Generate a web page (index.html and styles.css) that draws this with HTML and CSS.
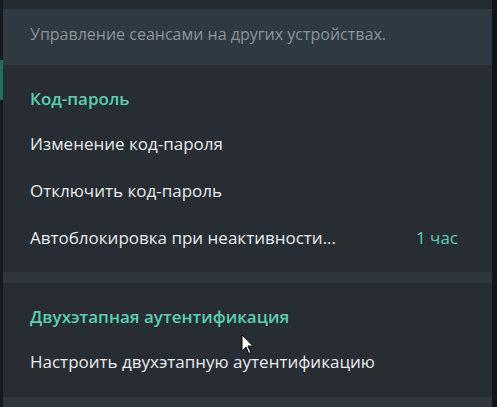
FILE: index.html
```html
<!DOCTYPE html>
<html lang="ru">
<head>
    <meta charset="UTF-8">
    <title>Конфиденциальность</title>
    <link rel="stylesheet" href="styles.css">
</head>
<body>
    <div class="screen">
        <div class="edge edge-left">
            <span class="chat-mark"></span>
        </div>

        <div class="panel">
            <div class="panel-top"></div>
            <div class="about">Управление сеансами на других устройствах.</div>

            <section class="group">
                <h2 class="group-title">Код-пароль</h2>
                <div class="row">Изменение код-пароля</div>
                <div class="row">Отключить код-пароль</div>
                <div class="row">
                    <span>Автоблокировка при неактивности...</span>
                    <span class="row-value">1 час</span>
                </div>
            </section>

            <div class="divider"></div>

            <section class="group">
                <h2 class="group-title">Двухэтапная аутентификация</h2>
                <div class="row">Настроить двухэтапную аутентификацию</div>
            </section>

            <div class="divider divider-bottom"></div>

            <svg class="cursor" width="13" height="21" viewBox="0 0 13 21">
                <path d="M1 1 L1 17 L5 13 L8 20 L10 19 L7 12 L12 12 Z" fill="#fff" stroke="#000" stroke-width="1"/>
            </svg>
        </div>

        <div class="edge edge-right"></div>
    </div>
</body>
</html>
```

FILE: styles.css
```css
:root {
    --fundo: #16191d;
    --painel: #282d33;
    --painel-topo: #262b31;
    --caixa: #2f3942;
    --divisor: #2f363d;
    --texto: #e8ebee;
    --texto-cinza: #8b949c;
    --verde: #58d0b2;
}

body {
    margin: 0;
    padding: 0;
    background-color: var(--fundo);
    font-family: "Open Sans", "Noto Sans", sans-serif;
    font-size: 17px;
    overflow: hidden;
}

.screen {
    display: flex;
    height: 407px;
}

.edge {
    background-color: var(--fundo);
}

.edge-left {
    width: 3px;
    display: flex;
    flex-direction: column;
    padding-top: 60px;
}

.chat-mark {
    display: block;
    height: 40px;
    background-color: #1f6f5e;
}

.edge-right {
    width: 5px;
    background-color: #121417;
}

.panel {
    width: 489px;
    background-color: var(--painel);
    display: flex;
    flex-direction: column;
    position: relative;
}

.panel-top {
    height: 9px;
    background-color: var(--painel-topo);
}

.about {
    height: 57px;
    background-color: var(--caixa);
    color: var(--texto-cinza);
    font-size: 16px;
    padding-left: 27px;
    line-height: 50px;
    box-sizing: border-box;
}

.group {
    padding: 23px 0 11px;
}

.group:last-of-type {
    padding-bottom: 12px;
}

.group-title {
    margin: 0 0 10px;
    padding-left: 27px;
    font-size: 17px;
    font-weight: 600;
    line-height: 22px;
    color: var(--verde);
}

.row {
    height: 47px;
    display: flex;
    align-items: center;
    justify-content: space-between;
    padding: 0 34px 0 27px;
    color: var(--texto);
}

.row-value {
    color: var(--verde);
}

.divider {
    height: 12px;
    background-color: var(--divisor);
}

.divider-bottom {
    height: 10px;
}

.cursor {
    position: absolute;
    left: 238px;
    top: 334px;
}
```
